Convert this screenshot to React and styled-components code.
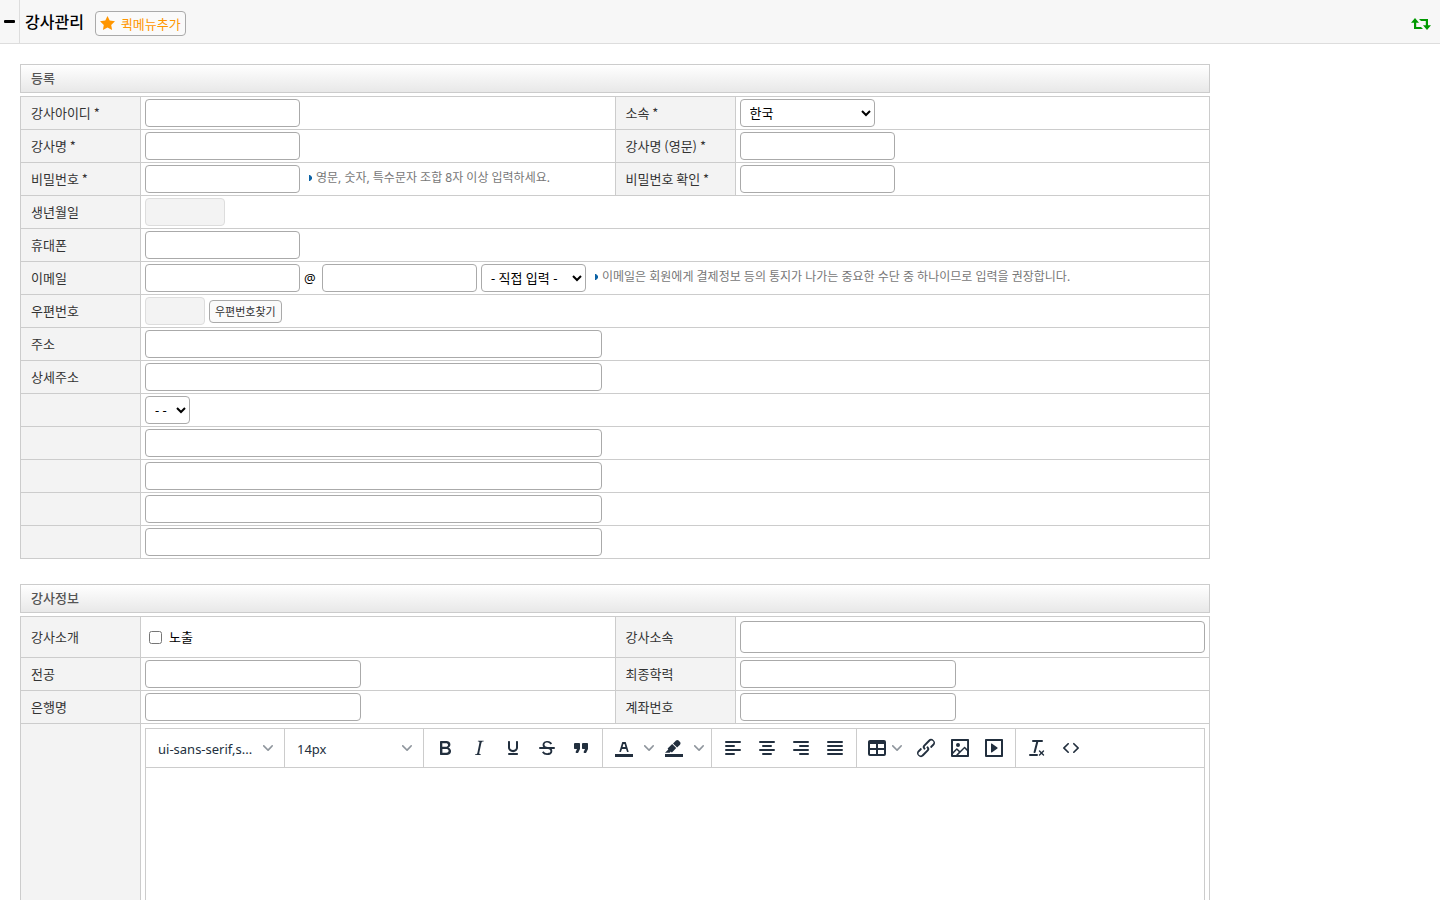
import React from 'react'
import styled, { createGlobalStyle } from 'styled-components'

const FONT = `'Noto Sans', 'Noto Sans CJK KR', sans-serif`
const LABEL_FONT = `'Noto Sans CJK KR', 'Noto Sans', sans-serif`

const GlobalStyle = createGlobalStyle`
	* {
		box-sizing: border-box;
	}

	body {
		margin: 0;
		background: #fff;
		color: #000;
		font-family: ${FONT};
		font-size: 13px;
		line-height: 18px;
	}

	input,
	select,
	button,
	textarea {
		margin: 0;
		font-family: inherit;
		font-size: inherit;
	}
`

const ICONS = {
	bold: 'M7.8 19c-.3 0-.5 0-.6-.2l-.2-.5V5.7c0-.2 0-.4.2-.5l.6-.2h5c1.5 0 2.7.3 3.5 1 .7.6 1.1 1.4 1.1 2.5a3 3 0 0 1-.6 1.9c-.4.6-1 1-1.6 1.2.4.1.9.3 1.3.6s.8.7 1 1.2c.4.4.5 1 .5 1.6 0 1.3-.4 2.3-1.3 3-.8.7-2.1 1-3.8 1H7.8Zm5-8.3c.6 0 1.2-.1 1.6-.5.4-.3.6-.7.6-1.3 0-1.1-.8-1.7-2.3-1.7H9.3v3.5h3.4Zm.5 6c.7 0 1.3-.1 1.7-.4.4-.4.6-.9.6-1.5s-.2-1-.7-1.4c-.4-.3-1-.4-2-.4H9.4v3.8h4Z',
	italic: 'm16.7 4.7-.1.9h-.3c-.6 0-1 0-1.4.3-.3.3-.4.6-.5 1.1l-2.1 9.8v.6c0 .5.4.8 1.4.8h.2l-.2.8H8l.2-.8h.2c1.1 0 1.8-.5 2-1.5l2-9.8.1-.5c0-.6-.4-.8-1.4-.8h-.3l.2-.9h5.8Z',
	underline: 'M16 5c.6 0 1 .4 1 1v5.5a4 4 0 0 1-.4 1.8l-1 1.4a5.3 5.3 0 0 1-5.5 1 5 5 0 0 1-1.6-1c-.5-.4-.8-.9-1.1-1.4a4 4 0 0 1-.4-1.8V6c0-.6.4-1 1-1s1 .4 1 1v5.5c0 .3 0 .6.2 1l.6.7a3.3 3.3 0 0 0 2.2.8 3.4 3.4 0 0 0 2.2-.8c.3-.2.4-.5.6-.8l.2-.9V6c0-.6.4-1 1-1ZM8 17h8c.6 0 1 .4 1 1s-.4 1-1 1H8a1 1 0 0 1 0-2Z',
	strike: 'M15.6 8.5c-.5-.7-1-1.1-1.3-1.3-.6-.4-1.3-.6-2-.6-2.7 0-2.8 1.7-2.8 2.1 0 1.6 1.8 2 3.2 2.3 4.4.9 4.6 2.8 4.6 3.9 0 1.4-.7 4.1-5 4.1A6.2 6.2 0 0 1 7 16.4l1.5-1.1c.4.6 1.6 2 3.7 2 1.6 0 2.5-.4 3-1.2.4-.8.3-2-.8-2.6-.7-.4-1.6-.7-2.9-1-1-.2-3.9-.8-3.9-3.6C7.6 6 10.3 5 12.4 5c2.9 0 4.2 1.6 4.7 2.4l-1.5 1.1Z',
	strikeLine: 'M5 11h14a1 1 0 0 1 0 2H5a1 1 0 0 1 0-2Z',
	quote: 'M7.5 17h.9c.4 0 .7-.2.9-.6L11 13V8c0-.6-.4-1-1-1H6a1 1 0 0 0-1 1v4c0 .6.4 1 1 1h2l-1.3 2.7a1 1 0 0 0 .8 1.3Zm8 0h.9c.4 0 .7-.2.9-.6L19 13V8c0-.6-.4-1-1-1h-4a1 1 0 0 0-1 1v4c0 .6.4 1 1 1h2l-1.3 2.7a1 1 0 0 0 .8 1.3Z',
	bar: 'M3 18h18v3H3z',
	textColor: 'M8.7 16h-.8a.5.5 0 0 1-.5-.6l2.7-9c.1-.3.3-.4.5-.4h2.8c.2 0 .4.1.5.4l2.7 9a.5.5 0 0 1-.5.6h-.8a.5.5 0 0 1-.4-.4l-.7-2.2c0-.3-.3-.4-.5-.4h-3.4c-.2 0-.4.1-.5.4l-.7 2.2c0 .3-.2.4-.4.4Zm2.6-7.6-.6 2a.5.5 0 0 0 .5.6h1.6a.5.5 0 0 0 .5-.6l-.6-2c0-.3-.3-.4-.5-.4h-.4c-.2 0-.4.1-.5.4Z',
	highlight: 'M7.7 16.7H3l3.3-3.3-.7-.8L10.2 8l4 4.1-4 4.2c-.2.2-.6.2-.8 0l-.6-.7-1.1 1.1zm5-7.5L11 7.4l3-2.9a2 2 0 0 1 2.6 0L18 6c.7.7.7 2 0 2.7l-2.9 2.9-1.8-1.8-.5-.6Z',
	alignLeft: 'M5 5h14a1 1 0 0 1 0 2H5a1 1 0 1 1 0-2Zm0 4h8a1 1 0 0 1 0 2H5a1 1 0 1 1 0-2Zm0 8h8a1 1 0 0 1 0 2H5a1 1 0 0 1 0-2Zm0-4h14a1 1 0 0 1 0 2H5a1 1 0 0 1 0-2Z',
	alignCenter: 'M5 5h14a1 1 0 0 1 0 2H5a1 1 0 1 1 0-2Zm3 4h8a1 1 0 0 1 0 2H8a1 1 0 1 1 0-2Zm0 8h8a1 1 0 0 1 0 2H8a1 1 0 0 1 0-2Zm-3-4h14a1 1 0 0 1 0 2H5a1 1 0 0 1 0-2Z',
	alignRight: 'M5 5h14a1 1 0 0 1 0 2H5a1 1 0 1 1 0-2Zm6 4h8a1 1 0 0 1 0 2h-8a1 1 0 0 1 0-2Zm0 8h8a1 1 0 0 1 0 2h-8a1 1 0 0 1 0-2Zm-6-4h14a1 1 0 0 1 0 2H5a1 1 0 0 1 0-2Z',
	alignJustify: 'M5 5h14a1 1 0 0 1 0 2H5a1 1 0 1 1 0-2Zm0 4h14a1 1 0 0 1 0 2H5a1 1 0 1 1 0-2Zm0 4h14a1 1 0 0 1 0 2H5a1 1 0 0 1 0-2Zm0 4h14a1 1 0 0 1 0 2H5a1 1 0 0 1 0-2Z',
	table: 'M19 4a2 2 0 0 1 2 2v12a2 2 0 0 1-2 2H5a2 2 0 0 1-2-2V6c0-1.1.9-2 2-2h14ZM5 14v4h6v-4H5Zm14 0h-6v4h6v-4Zm0-6h-6v4h6V8ZM5 12h6V8H5v4Z',
	link: 'M6.2 12.3a1 1 0 0 1 1.4 1.4l-2 2a2 2 0 1 0 2.6 2.8l4.8-4.8a1 1 0 0 0 0-1.4 1 1 0 1 1 1.4-1.3 2.9 2.9 0 0 1 0 4L9.6 20a3.9 3.9 0 0 1-5.5-5.5l2-2Zm11.6-.6a1 1 0 0 1-1.4-1.4l2-2a2 2 0 1 0-2.6-2.8L11 10.3a1 1 0 0 0 0 1.4A1 1 0 1 1 9.6 13a2.9 2.9 0 0 1 0-4L14.4 4a3.9 3.9 0 0 1 5.5 5.5l-2 2Z',
	image: 'm5 15.7 3.3-3.2c.3-.3.7-.3 1 0L12 15l4.1-4c.3-.4.8-.4 1 0l2 1.9V5H5v10.7ZM5 18V19h3l2.8-2.9-2-2L5 17.9Zm14-3-2.5-2.4-6.4 6.5H19v-4ZM4 3h16c.6 0 1 .4 1 1v16c0 .6-.4 1-1 1H4a1 1 0 0 1-1-1V4c0-.6.4-1 1-1Zm6 8a2 2 0 1 0 0-4 2 2 0 0 0 0 4Z',
	media: 'M4 3h16c.6 0 1 .4 1 1v16c0 .6-.4 1-1 1H4a1 1 0 0 1-1-1V4c0-.6.4-1 1-1Zm1 2v14h14V5H5Zm4.8 2.6 5.6 4a.5.5 0 0 1 0 .8l-5.6 4A.5.5 0 0 1 9 16V8a.5.5 0 0 1 .8-.4Z',
	removeFormat: 'M13.2 6a1 1 0 0 1 0 .2l-2.6 10a1 1 0 0 1-1 .8h-.2a.8.8 0 0 1-.8-1l2.6-10H8a1 1 0 1 1 0-2h9a1 1 0 0 1 0 2h-3.8ZM5 18h7a1 1 0 0 1 0 2H5a1 1 0 0 1 0-2Zm13 1.5L16.5 18 15 19.5a.7.7 0 0 1-1-1l1.5-1.5-1.5-1.5a.7.7 0 0 1 1-1l1.5 1.5 1.5-1.5a.7.7 0 0 1 1 1L17.5 17l1.5 1.5a.7.7 0 0 1-1 1Z',
	code: 'M9.8 15.7c.3.3.3.8 0 1-.3.4-.9.4-1.2 0l-4.4-4.1a.8.8 0 0 1 0-1.2l4.4-4.2c.3-.3.9-.3 1.2 0 .3.3.3.8 0 1.1L6 12l3.8 3.7ZM14.2 15.7c-.3.3-.3.8 0 1 .4.4.9.4 1.2 0l4.4-4.1c.3-.3.3-.9 0-1.2l-4.4-4.2a.8.8 0 0 0-1.2 0c-.3.3-.3.8 0 1.1L18 12l-3.8 3.7Z',
}

function Icon({ names }) {
	return (
		<svg width="24" height="24" viewBox="0 0 24 24" fill="#222f3e" aria-hidden="true">
			{names.map((name) => (
				<path key={name} d={ICONS[name]} fillRule="evenodd" />
			))}
		</svg>
	)
}

function Chevron() {
	return (
		<ChevronSvg width="10" height="10" viewBox="0 0 10 10" aria-hidden="true">
			<path d="M8.7 2.2c.3-.3.8-.3 1 0 .4.4.4.9 0 1.2L5.7 7.8c-.3.3-.9.3-1.2 0L.2 3.4a.8.8 0 0 1 0-1.2c.3-.3.8-.3 1.1 0L5 6l3.7-3.8Z" />
		</ChevronSvg>
	)
}

function Tool({ label, icons }) {
	return (
		<ToolButton type="button" aria-label={label}>
			<Icon names={icons} />
		</ToolButton>
	)
}

function SplitTool({ label, icons }) {
	return (
		<>
			<Tool label={label} icons={icons} />
			<ArrowButton type="button" aria-label={`${label} 선택`}>
				<Chevron />
			</ArrowButton>
		</>
	)
}

function Editor() {
	return (
		<EditorBox>
			<Toolbar>
				<ToolGroup>
					<PickerBox>
						<Picker aria-label="글꼴">
							<option>ui-sans-serif,s...</option>
						</Picker>
						<Chevron />
					</PickerBox>
				</ToolGroup>
				<ToolGroup>
					<PickerBox>
						<Picker aria-label="글자 크기">
							<option>14px</option>
						</Picker>
						<Chevron />
					</PickerBox>
				</ToolGroup>
				<ToolGroup>
					<Tool label="굵게" icons={['bold']} />
					<Tool label="기울임꼴" icons={['italic']} />
					<Tool label="밑줄" icons={['underline']} />
					<Tool label="취소선" icons={['strike', 'strikeLine']} />
					<Tool label="인용문" icons={['quote']} />
				</ToolGroup>
				<ToolGroup>
					<SplitTool label="글자색" icons={['bar', 'textColor']} />
					<SplitTool label="배경색" icons={['bar', 'highlight']} />
				</ToolGroup>
				<ToolGroup>
					<Tool label="왼쪽 맞춤" icons={['alignLeft']} />
					<Tool label="가운데 맞춤" icons={['alignCenter']} />
					<Tool label="오른쪽 맞춤" icons={['alignRight']} />
					<Tool label="양쪽 맞춤" icons={['alignJustify']} />
				</ToolGroup>
				<ToolGroup>
					<MenuButton type="button" aria-label="표">
						<Icon names={['table']} />
						<Chevron />
					</MenuButton>
					<Tool label="링크" icons={['link']} />
					<Tool label="이미지" icons={['image']} />
					<Tool label="미디어" icons={['media']} />
				</ToolGroup>
				<ToolGroup>
					<Tool label="서식 지우기" icons={['removeFormat']} />
					<Tool label="소스코드" icons={['code']} />
				</ToolGroup>
			</Toolbar>
			<EditorArea aria-label="본문" />
		</EditorBox>
	)
}

function Hint({ children }) {
	return (
		<HintText>
			<svg width="3" height="6" viewBox="0 0 3 6" aria-hidden="true">
				<path d="M0 0h1l2 2v2L1 6H0z" fill="#0d63a5" />
			</svg>
			{children}
		</HintText>
	)
}

function TextRow({ id, label, $size, ...rest }) {
	return (
		<tr>
			<Th scope="row">{label && <label htmlFor={id}>{label}</label>}</Th>
			<Td colSpan="3">
				<TextInput id={id} aria-label={label ? undefined : id} $size={$size} {...rest} />
			</Td>
		</tr>
	)
}

function Columns() {
	return (
		<colgroup>
			<LabelCol />
			<col />
			<LabelCol />
			<col />
		</colgroup>
	)
}

export default function App() {
	return (
		<>
			<GlobalStyle />
			<TopBar>
				<FoldButton type="button" aria-label="메뉴 접기">
					<svg width="11" height="3" viewBox="0 0 11 3" aria-hidden="true">
						<rect width="11" height="3" rx="1" fill="#000" />
					</svg>
				</FoldButton>
				<Title>강사관리</Title>
				<QuickButton type="button">
					<svg width="15" height="14" viewBox="0 0 15 14" aria-hidden="true">
						<path d="M7.5 0 9.7 4.6 15 5.3 11.2 8.9 12.1 14 7.5 11.6 2.9 14 3.8 8.9 0 5.3 5.3 4.6Z" fill="#ff9600" />
					</svg>
					퀵메뉴추가
				</QuickButton>
				<RefreshButton type="button" aria-label="새로고침">
					<svg width="20" height="12" viewBox="0 0 20 12" fill="#090" aria-hidden="true">
						<path d="M4 0 8 4.8H5.2V9H10l2 2H3V4.8H0Z" />
						<path d="M16 12 12 7.2h2.8V3H10L8 1h9v6.2h3Z" />
					</svg>
				</RefreshButton>
			</TopBar>

			<Main>
				<section>
					<SectionTitle>등록</SectionTitle>
					<FormTable>
						<Columns />
						<tbody>
							<tr>
								<Th scope="row">
									<label htmlFor="userId">강사아이디 *</label>
								</Th>
								<Td>
									<TextInput id="userId" />
								</Td>
								<Th scope="row">
									<label htmlFor="nation">소속 *</label>
								</Th>
								<Td>
									<Select id="nation" $width="135px">
										<option>한국</option>
									</Select>
								</Td>
							</tr>
							<tr>
								<Th scope="row">
									<label htmlFor="userName">강사명 *</label>
								</Th>
								<Td>
									<TextInput id="userName" />
								</Td>
								<Th scope="row">
									<label htmlFor="userNameEn">강사명 (영문) *</label>
								</Th>
								<Td>
									<TextInput id="userNameEn" />
								</Td>
							</tr>
							<tr>
								<Th scope="row">
									<label htmlFor="pw">비밀번호 *</label>
								</Th>
								<Td>
									<Fields>
										<TextInput id="pw" type="password" />
										<Hint>영문, 숫자, 특수문자 조합 8자 이상 입력하세요.</Hint>
									</Fields>
								</Td>
								<Th scope="row">
									<label htmlFor="pwCheck">비밀번호 확인 *</label>
								</Th>
								<Td>
									<TextInput id="pwCheck" type="password" />
								</Td>
							</tr>
							<TextRow id="birth" label="생년월일" $size="small" disabled />
							<TextRow id="mobile" label="휴대폰" />
							<tr>
								<Th scope="row">
									<label htmlFor="email">이메일</label>
								</Th>
								<Td colSpan="3">
									<Fields>
										<TextInput id="email" />
										<AtSign>@</AtSign>
										<TextInput aria-label="이메일 도메인" />
										<Select aria-label="이메일 도메인 선택" $width="105px">
											<option>- 직접 입력 -</option>
										</Select>
										<Hint>이메일은 회원에게 결제정보 등의 통지가 나가는 중요한 수단 중 하나이므로 입력을 권장합니다.</Hint>
									</Fields>
								</Td>
							</tr>
							<tr>
								<Th scope="row">
									<label htmlFor="zip">우편번호</label>
								</Th>
								<Td colSpan="3">
									<Fields>
										<TextInput id="zip" $size="tiny" disabled />
										<SmallButton type="button">우편번호찾기</SmallButton>
									</Fields>
								</Td>
							</tr>
							<TextRow id="addr" label="주소" $size="wide" />
							<TextRow id="addrDetail" label="상세주소" $size="wide" />
							<tr>
								<Th scope="row" />
								<Td colSpan="3">
									<Select aria-label="기타 선택" $width="45px">
										<option>- -</option>
									</Select>
								</Td>
							</tr>
							<TextRow id="etc1" $size="wide" />
							<TextRow id="etc2" $size="wide" />
							<TextRow id="etc3" $size="wide" />
							<TextRow id="etc4" $size="wide" />
						</tbody>
					</FormTable>
				</section>

				<section>
					<SectionTitle>강사정보</SectionTitle>
					<FormTable>
						<Columns />
						<tbody>
							<tr>
								<Th scope="row">강사소개</Th>
								<Td $roomy>
									<CheckLabel>
										<input type="checkbox" />
										노출
									</CheckLabel>
								</Td>
								<Th scope="row">
									<label htmlFor="team">강사소속</label>
								</Th>
								<Td $roomy>
									<TextInput id="team" $size="full" />
								</Td>
							</tr>
							<tr>
								<Th scope="row">
									<label htmlFor="major">전공</label>
								</Th>
								<Td>
									<TextInput id="major" $size="medium" />
								</Td>
								<Th scope="row">
									<label htmlFor="school">최종학력</label>
								</Th>
								<Td>
									<TextInput id="school" $size="medium" />
								</Td>
							</tr>
							<tr>
								<Th scope="row">
									<label htmlFor="bank">은행명</label>
								</Th>
								<Td>
									<TextInput id="bank" $size="medium" />
								</Td>
								<Th scope="row">
									<label htmlFor="account">계좌번호</label>
								</Th>
								<Td>
									<TextInput id="account" $size="medium" />
								</Td>
							</tr>
							<tr>
								<Th scope="row" />
								<Td colSpan="3" $roomy>
									<Editor />
								</Td>
							</tr>
						</tbody>
					</FormTable>
				</section>
			</Main>
		</>
	)
}

const TopBar = styled.header`
	display: flex;
	align-items: center;
	height: 44px;
	border-bottom: 1px solid #ddd;
	background: #f7f7f7;
`

const FoldButton = styled.button`
	display: flex;
	align-items: center;
	justify-content: center;
	align-self: stretch;
	width: 20px;
	padding: 0;
	border: 0;
	border-right: 1px solid #ddd;
	background: none;
`

const Title = styled.h1`
	margin: 0 11px 0 5px;
	font-size: 16px;
	font-weight: 500;
	line-height: 24px;
`

const QuickButton = styled.button`
	display: flex;
	align-items: center;
	gap: 6px;
	height: 25px;
	margin-top: 3px;
	padding: 0 4px;
	border: 1px solid #aaa;
	border-radius: 4px;
	background: #fafafa;
	color: #ff9600;
`

const RefreshButton = styled.button`
	display: flex;
	margin: 4px 9px 0 auto;
	padding: 0;
	border: 0;
	background: none;
`

const Main = styled.main`
	display: flex;
	flex-direction: column;
	gap: 25px;
	max-width: 1230px;
	padding: 20px;
`

const SectionTitle = styled.h2`
	height: 29px;
	margin: 0 0 3px;
	padding: 0 10px;
	border: 1px solid #ccc;
	background: linear-gradient(#fff, #e8e8e8);
	color: #555;
	font-size: 13px;
	font-weight: 500;
	line-height: 27px;
`

const FormTable = styled.table`
	width: 100%;
	border-collapse: collapse;
	table-layout: fixed;
`

const LabelCol = styled.col`
	width: 120px;
`

const Th = styled.th`
	padding: 0 10px;
	border: 1px solid #ccc;
	background: #f3f3f3;
	color: #333;
	font-family: ${LABEL_FONT};
	font-weight: 400;
	text-align: left;
`

const Td = styled.td`
	padding: ${({ $roomy }) => ($roomy ? '4px' : '2px 4px')};
	border: 1px solid #ccc;
`

const Fields = styled.div`
	display: flex;
	align-items: center;
	gap: 4px;
`

const AtSign = styled.span`
	width: 14px;
`

const INPUT_WIDTH = {
	tiny: '60px',
	small: '80px',
	medium: '216px',
	wide: '457px',
	full: '100%',
}

const TextInput = styled.input`
	display: block;
	width: ${({ $size }) => INPUT_WIDTH[$size] || '155px'};
	height: ${({ $size }) => ($size === 'full' ? '32px' : '28px')};
	padding: 0 6px;
	border: 1px solid #aaa;
	border-radius: 4px;
	background: #fff;

	&:disabled {
		border-color: #ddd;
		background: #f3f3f3;
	}
`

const Select = styled.select`
	display: block;
	width: ${({ $width }) => $width};
	height: 28px;
	padding: 0 0 0 5px;
	border: 1px solid #aaa;
	border-radius: 4px;
	background: #fff;
	color: #000;
`

const HintText = styled.span`
	display: flex;
	align-items: center;
	gap: 4px;
	padding: 0 0 2px 5px;
	color: #777;
	font-size: 12px;
`

const SmallButton = styled.button`
	height: 23px;
	padding: 0 5px;
	border: 1px solid #aaa;
	border-radius: 4px;
	background: #fafafa;
	color: #333;
	font-size: 11px;
`

const CheckLabel = styled.label`
	display: flex;
	align-items: center;
	gap: 7px;
	padding-left: 4px;
`

const EditorBox = styled.div`
	border: 1px solid #ccc;
`

const Toolbar = styled.div`
	display: flex;
	height: 39px;
	border-bottom: 1px solid #ccc;
`

const ToolGroup = styled.div`
	display: flex;
	align-items: center;
	padding: 0 4px;

	& + & {
		border-left: 1px solid #ccc;
	}
`

const ToolButton = styled.button`
	display: flex;
	align-items: center;
	justify-content: center;
	width: 34px;
	height: 28px;
	padding: 0;
	border: 0;
	background: none;
`

const ArrowButton = styled(ToolButton)`
	width: 16px;
`

const MenuButton = styled(ToolButton)`
	justify-content: flex-start;
	gap: 3px;
	width: 48px;
	padding-left: 4px;
`

const ChevronSvg = styled.svg`
	fill: #222f3e;
	opacity: 0.5;
`

const PickerBox = styled.div`
	display: grid;
	grid-template-columns: 1fr;
	align-items: center;
	width: 130px;

	& > * {
		grid-area: 1 / 1;
	}

	${ChevronSvg} {
		justify-self: end;
		margin-right: 7px;
		pointer-events: none;
	}
`

const Picker = styled.select`
	width: 100%;
	height: 28px;
	padding: 2px 24px 0 8px;
	border: 0;
	background: none;
	color: #222f3e;
	appearance: none;
`

const EditorArea = styled.textarea`
	display: block;
	width: 100%;
	height: 360px;
	padding: 10px;
	border: 0;
	background: none;
	resize: none;
`
